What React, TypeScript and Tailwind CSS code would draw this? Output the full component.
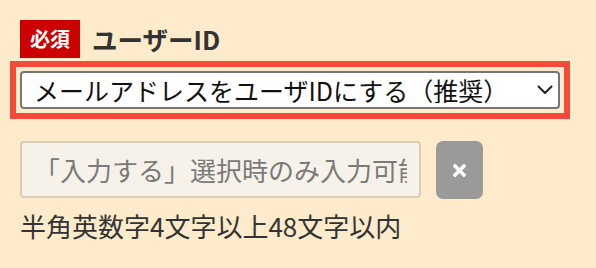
import React from 'react';

const jp = { fontFamily: '"Noto Sans CJK JP", "Noto Sans", sans-serif' };

export default function App() {
  return (
    <div className="min-h-screen w-full bg-[#fdebcc] pl-[20px] pt-[20px]" style={jp}>
      {/* Label */}
      <div className="flex items-center gap-[12px]">
        <span className="flex h-[38px] w-[60px] items-center justify-center bg-[#cc0000] text-[20px] font-bold text-white">
          必須
        </span>
        <span className="text-[25.5px] font-bold leading-none text-[#333333]">ユーザーID</span>
      </div>

      {/* Select with focus outline */}
      <div className="-ml-[10px] mt-[3px] w-[560px] border-[6px] border-[#f5493c] p-[4px]">
        <div className="relative">
          <select
            defaultValue="email"
            className="h-[38px] w-full appearance-none rounded-[4px] border-2 border-[#767676] bg-white pl-[12px] pr-[40px] text-[25px] leading-none text-[#111111] outline-none"
            style={jp}
          >
            <option value="email">メールアドレスをユーザIDにする（推奨）</option>
            <option value="input">入力する</option>
          </select>
          <svg
            className="pointer-events-none absolute right-[7px] top-[14px]"
            width="16"
            height="10"
            viewBox="0 0 16 10"
            fill="none"
          >
            <path d="M1.5 1.5 L8 8 L14.5 1.5" stroke="#222" strokeWidth="2" strokeLinecap="round" strokeLinejoin="round" />
          </svg>
        </div>
      </div>

      {/* Text input + clear button */}
      <div className="mt-[22px] flex items-start gap-[15px]">
        <input
          type="text"
          disabled
          placeholder="「入力する」選択時のみ入力可能"
          className="h-[57px] w-[401px] rounded-[4px] border-2 border-[#d9cdb8] bg-[#f7f2e9] px-[12px] text-[26px] text-[#333] placeholder:text-[#7a7a7a]"
          style={jp}
        />
        <button className="flex h-[58px] w-[47px] items-center justify-center rounded-[7px] bg-[#9a9a9a]">
          <svg width="13" height="13" viewBox="0 0 13 13">
            <path d="M2 2 L11 11 M11 2 L2 11" stroke="#fff" strokeWidth="3.6" strokeLinecap="square" />
          </svg>
        </button>
      </div>

      {/* Helper */}
      <p className="mt-[12px] text-[26px] leading-[30px] text-[#333333]">半角英数字4文字以上48文字以内</p>
    </div>
  );
}
